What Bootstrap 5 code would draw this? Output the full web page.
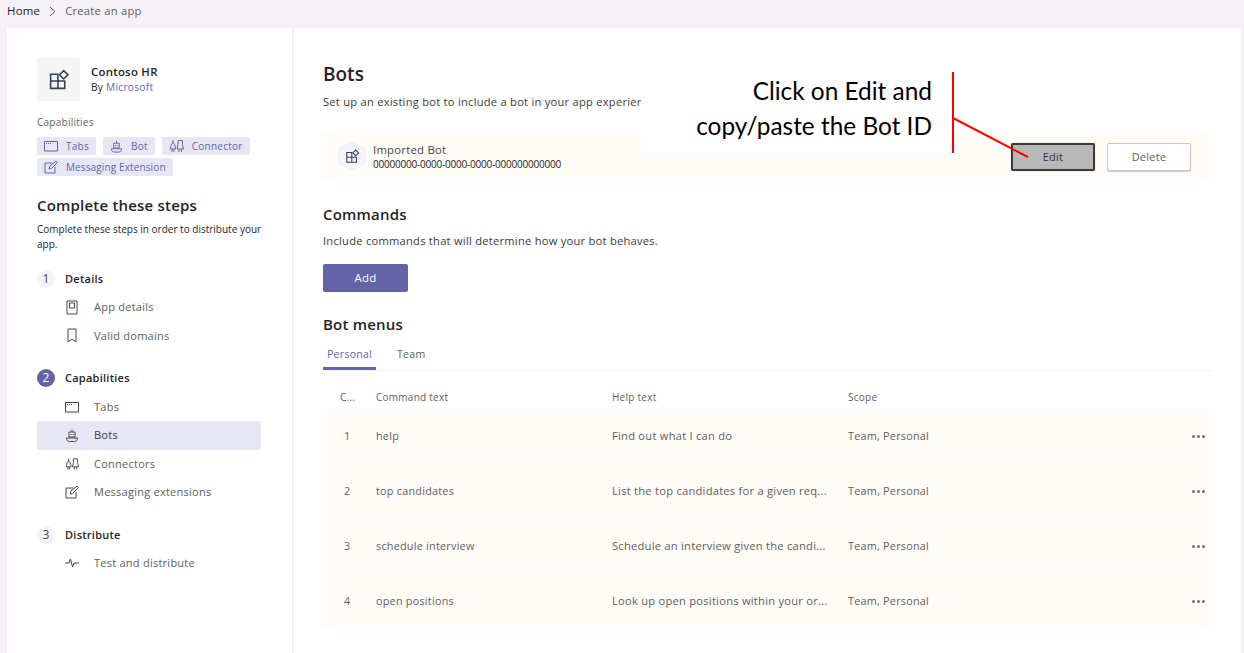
<!DOCTYPE html>
<html lang="en">
<head>
  <meta charset="UTF-8">
  <meta name="viewport" content="width=device-width, initial-scale=1.0">
  <title>Create an app</title>
  <link href="https://cdn.jsdelivr.net/npm/bootstrap@5.3.5/dist/css/bootstrap.min.css" rel="stylesheet">
  <style>
    html, body { height: 653px; overflow: hidden; }
    body { background: #f5f1f6; color: #252423; font-family: "Open Sans", sans-serif; font-size: 11px; position: relative; letter-spacing: .25px; }
    svg { display: block; flex: none; fill: none; stroke: currentColor; stroke-width: 1; }
    .crumbs { height: 28px; padding-left: 7px; font-size: 11.2px; color: #5f5e5d; gap: 8px; padding-bottom: 6px; }
    .crumbs .home { color: #252423; font-size: 11.4px; }
    .shell { height: 625px; }
    .side { width: 285px; margin-left: 7px; background: #fff; padding: 30px 30px 0 30px; flex: none; }
    .main-pane { margin-left: 2px; margin-right: 3px; flex: 1; background: #fff; padding: 34px 30px 0 29px; min-width: 0; }
    .app-tile { width: 43px; height: 43px; background: #f5f5f5; color: #33415c; border-radius: 2px; margin-right: 3px; }
    .thick { stroke-width: 1.5; }
    .app-name { font-weight: 600; font-size: 11.4px; line-height: 16px; }
    .app-by { font-size: 10.2px; line-height: 15px; }
    .app-by span { color: #6264a7; }
    .cap-label { font-size: 10px; color: #605e5c; margin-top: 14px; line-height: 14px; }
    .chips { gap: 3px 7px; margin-top: 8px; width: 224px; }
    .chip { background: #e6e6f4; color: #6264a7; height: 18px; border-radius: 2px; padding: 0 7px; gap: 8px; font-size: 10px; white-space: nowrap; letter-spacing: .25px; }
    .chip-long { letter-spacing: .12px; }
    .steps-title { font-size: 15px; font-weight: 600; margin: 19px 0 0; line-height: 20px; letter-spacing: .2px; }
    .steps-sub { font-size: 10px; line-height: 14.5px; margin: 7px 0 0; letter-spacing: 0; }
    .step-head { height: 28px; gap: 10px; font-weight: 600; font-size: 11px; }
    .step-num { width: 18px; height: 18px; border-radius: 50%; background: #f5f3f7; font-weight: 400; font-size: 12px; color: #484644; }
    .step-num.active-num { background: #6264a7; color: #fff; }
    .step-item { height: 28.5px; gap: 15px; padding-left: 28px; color: #605e5c; border-radius: 2px; width: 224px; }
    .step-item svg { color: #484644; }
    .step-item.current { background: #e6e6f4; color: #3b3a39; }
    .first-head { margin-top: 14px; }
    .group-gap { margin-top: 14px; height: 28.5px; }
    .pane-title { font-size: 19px; font-weight: 600; line-height: 24px; margin: 0; letter-spacing: 0; }
    .pane-text { font-size: 11.15px; line-height: 16px; margin: 0; color: #3b3a39; }
    .include-text { margin-top: 9px; }
    .bot-row { background: #fffbf6; height: 48px; margin-top: 22px; padding-left: 15px; gap: 7px; }
    .hex { width: 28px; height: 30px; background: #f3f4f8; color: #33415c; clip-path: polygon(50% 0, 100% 25%, 100% 75%, 50% 100%, 0 75%, 0 25%); }
    .bot-name { font-size: 11.3px; line-height: 14px; color: #484644; margin-top: 3px; }
    .bot-id { font-size: 10px; line-height: 15px; letter-spacing: -.22px; color: #252423; }
    .btn-edit, .btn-delete { width: 84px; height: 28px; padding: 0; font-size: 11px; border-radius: 2px; letter-spacing: .25px; margin-top: 2px; }
    .btn-edit { background: #b8b8b8; border: 2px solid #3a3a3a; color: #333; box-shadow: 0 0 1px #888; }
    .btn-delete { background: #fff; border: 1px solid #c8c6c4; color: #605e5c; margin-left: 5px; margin-right: 20px; box-shadow: 0 1px 1px #ccc; }
    .sec-title { font-size: 15px; font-weight: 600; line-height: 20px; margin: 0; letter-spacing: .2px; }
    .add-title { margin-top: 22px; }
    .btn-add { width: 85px; height: 28px; padding: 0; background: #6264a7; color: #fff; border: 0; border-radius: 2px; font-size: 11.4px; letter-spacing: .25px; margin-top: 15px; }
    .tabs-row { border-bottom: 1px solid #f3f2f1; height: 28px; margin-top: 9px; }
    .tab-link { height: 27px; line-height: 23px; color: #605e5c; font-size: 10.6px; }
    .tab-link.on { color: #6264a7; border-bottom: 3px solid #6264a7; width: 53px; padding-left: 4px; margin-right: 21px; }
    .cmd-head { height: 38px; color: #605e5c; font-size: 10px; padding-top: 14px; }
    .cmd-row { height: 54px; background: #fffbf6; margin-bottom: 1px; color: #605e5c; font-size: 10.8px; }
    .c-num { width: 53px; padding-left: 17px; flex: none; }
    .cmd-row .c-num { padding-left: 21px; }
    .c-text { width: 236px; flex: none; }
    .c-help { width: 236px; flex: none; }
    .cmd-row .c-help { font-size: 11.15px; }
    .c-scope { flex: 1; }
    .c-more { width: 19px; flex: none; }
    .dots { gap: 2px; }
    .dots i { width: 3px; height: 3px; border-radius: 50%; background: #6f6e6d; display: block; }
    .callout { position: absolute; left: 641px; top: 60px; width: 312px; height: 93px; background: #fff; }
    .callout-text { position: absolute; right: 21px; top: 13px; width: 290px; text-align: right; font-family: Lato, sans-serif; font-size: 24.4px; line-height: 35px; color: #000; letter-spacing: 0; }
    .red-lines { position: absolute; left: 940px; top: 70px; }
    .red-lines path { stroke: #f00; stroke-width: 2; }
  </style>
</head>
<body>
  <div class="crumbs d-flex align-items-center">
    <span class="home">Home</span>
    <svg width="9" height="11" viewBox="0 0 9 11"><path d="M2 1l5 4.500L2 10"/></svg>
    <span>Create an app</span>
  </div>

  <div class="shell d-flex">
    <aside class="side">
      <div class="d-flex align-items-center gap-2">
        <div class="app-tile d-flex align-items-center justify-content-center">
          <svg class="thick" width="22" height="22" viewBox="0 0 21 21"><path d="M10 5H2.500v13.500H16V11M2.500 11.500H16M9.500 5v13.500"/><path d="M15 1.500l4 4-4 4-4-4z"/></svg>
        </div>
        <div>
          <div class="app-name">Contoso HR</div>
          <div class="app-by">By <span>Microsoft</span></div>
        </div>
      </div>
      <div class="cap-label">Capabilities</div>
      <div class="chips d-flex flex-wrap">
        <div class="chip d-flex align-items-center"><svg width="14" height="12" viewBox="0 0 14 12"><path d="M.5 1.500h13v9.500H.5zM2 3.500h1M4 3.500h1M6 3.500h1"/></svg>Tabs</div>
        <div class="chip d-flex align-items-center"><svg width="13" height="14" viewBox="0 0 14 14"><path d="M4 4h6v5H4zM7 1.500V4M5.500 6.500h1M7.800 6.500h1M1.500 10h11c0 2.500-1.500 3.500-3 3.500h-5c-1.500 0-3-1-3-3.500z"/></svg>Bot</div>
        <div class="chip d-flex align-items-center"><svg width="15" height="14" viewBox="0 0 15 14"><path d="M4 1v3M1.500 10c0-3 1-6 2.500-6s2.500 3 2.500 6zM3 10v3M5 10v3M9 1.500h4.500v4L14.500 10h-6.500l1-4.500zM10 10v3M12.500 10v3"/></svg>Connector</div>
        <div class="chip chip-long d-flex align-items-center"><svg width="14" height="14" viewBox="0 0 14 14"><path d="M8 3H1v10h10V7M5 9l1-3 6-5 1.500 1.500-6 6z"/></svg>Messaging Extension</div>
      </div>

      <h2 class="steps-title">Complete these steps</h2>
      <p class="steps-sub">Complete these steps in order to distribute your app.</p>

      <div class="step-head first-head d-flex align-items-center"><span class="step-num d-flex align-items-center justify-content-center">1</span>Details</div>
      <div class="step-item d-flex align-items-center"><svg width="14" height="15" viewBox="0 0 14 15"><path d="M2 1h10v13H2zM4.500 3h5v5h-5z"/></svg>App details</div>
      <div class="step-item d-flex align-items-center"><svg width="14" height="15" viewBox="0 0 14 15"><path d="M3 1h8v13l-4-3-4 3z"/></svg>Valid domains</div>

      <div class="step-head d-flex align-items-center group-gap"><span class="step-num active-num d-flex align-items-center justify-content-center">2</span>Capabilities</div>
      <div class="step-item d-flex align-items-center"><svg width="14" height="12" viewBox="0 0 14 12"><path d="M.5 1.500h13v9.500H.5zM2 3.500h1M4 3.500h1M6 3.500h1"/></svg>Tabs</div>
      <div class="step-item current d-flex align-items-center"><svg width="14" height="14" viewBox="0 0 14 14"><path d="M4 4h6v5H4zM7 1.500V4M5.500 6.500h1M7.800 6.500h1M1.500 10h11c0 2.500-1.500 3.500-3 3.500h-5c-1.500 0-3-1-3-3.500z"/></svg>Bots</div>
      <div class="step-item d-flex align-items-center"><svg width="14" height="14" viewBox="0 0 15 14"><path d="M4 1v3M1.500 10c0-3 1-6 2.500-6s2.500 3 2.500 6zM3 10v3M5 10v3M9 1.500h4.500v4L14.500 10h-6.500l1-4.500zM10 10v3M12.500 10v3"/></svg>Connectors</div>
      <div class="step-item d-flex align-items-center"><svg width="14" height="14" viewBox="0 0 14 14"><path d="M8 3H1v10h10V7M5 9l1-3 6-5 1.500 1.500-6 6z"/></svg>Messaging extensions</div>

      <div class="step-head d-flex align-items-center group-gap"><span class="step-num d-flex align-items-center justify-content-center">3</span>Distribute</div>
      <div class="step-item d-flex align-items-center"><svg width="14" height="12" viewBox="0 0 14 12"><path d="M0 6h4l1.500-4 2 8L9 6h5"/></svg>Test and distribute</div>
    </aside>

    <main class="main-pane">
      <h1 class="pane-title">Bots</h1>
      <p class="pane-text mt-2">Set up an existing bot to include a bot in your app experience.</p>

      <div class="bot-row d-flex align-items-center">
        <div class="hex d-flex align-items-center justify-content-center">
          <svg class="thick" width="15" height="15" viewBox="0 0 21 21"><path d="M10 5H2.500v13.500H16V11M2.500 11.500H16M9.500 5v13.500"/><path d="M15 1.500l4 4-4 4-4-4z"/></svg>
        </div>
        <div class="flex-grow-1">
          <div class="bot-name">Imported Bot</div>
          <div class="bot-id">00000000-0000-0000-0000-000000000000</div>
        </div>
        <button class="btn btn-edit" type="button">Edit</button>
        <button class="btn btn-delete" type="button">Delete</button>
      </div>

      <h2 class="sec-title mt-4">Commands</h2>
      <p class="pane-text include-text">Include commands that will determine how your bot behaves.</p>
      <button class="btn btn-add" type="button">Add</button>

      <h2 class="sec-title add-title">Bot menus</h2>
      <div class="tabs-row d-flex">
        <div class="tab-link on">Personal</div>
        <div class="tab-link">Team</div>
      </div>

      <div class="cmd-head d-flex align-items-center"><div class="c-num">C...</div><div class="c-text">Command text</div><div class="c-help">Help text</div><div class="c-scope">Scope</div></div>
      <div class="cmd-row d-flex align-items-center"><div class="c-num">1</div><div class="c-text">help</div><div class="c-help">Find out what I can do</div><div class="c-scope">Team, Personal</div><div class="c-more dots d-flex"><i></i><i></i><i></i></div></div>
      <div class="cmd-row d-flex align-items-center"><div class="c-num">2</div><div class="c-text">top candidates</div><div class="c-help">List the top candidates for a given req...</div><div class="c-scope">Team, Personal</div><div class="c-more dots d-flex"><i></i><i></i><i></i></div></div>
      <div class="cmd-row d-flex align-items-center"><div class="c-num">3</div><div class="c-text">schedule interview</div><div class="c-help">Schedule an interview given the candi...</div><div class="c-scope">Team, Personal</div><div class="c-more dots d-flex"><i></i><i></i><i></i></div></div>
      <div class="cmd-row d-flex align-items-center"><div class="c-num">4</div><div class="c-text">open positions</div><div class="c-help">Look up open positions within your or...</div><div class="c-scope">Team, Personal</div><div class="c-more dots d-flex"><i></i><i></i><i></i></div></div>
    </main>
  </div>

  <div class="callout">
    <div class="callout-text">Click on Edit and<br>copy/paste the Bot ID</div>
  </div>
  <svg class="red-lines" width="100" height="90" viewBox="0 0 100 90"><path d="M13 2v81M13 48l75 39"/></svg>

  <script src="https://cdn.jsdelivr.net/npm/bootstrap@5.3.5/dist/js/bootstrap.bundle.min.js"></script>
</body>
</html>
